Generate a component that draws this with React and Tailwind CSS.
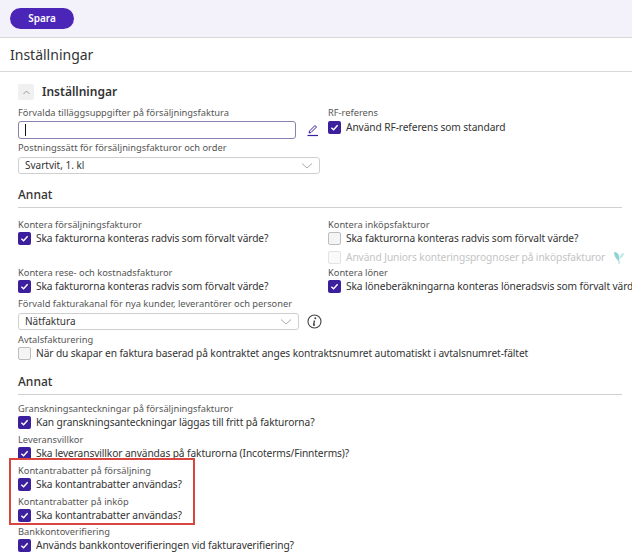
import React from "react";

const F = { fontFamily: '"Noto Sans", "Open Sans", sans-serif' };

function Cb({ checked, disabled, children }) {
  return (
    <div className={`flex items-center gap-[5px] h-[15px] text-[10.2px] tracking-[-0.1px] ${disabled ? "text-[#c4c4c4]" : "text-[#333]"}`}>
      {checked ? (
        <span className="w-[13px] h-[13px] rounded-[2px] bg-[#3b1f9c] flex items-center justify-center shrink-0">
          <svg width="9" height="9" viewBox="0 0 10 10"><path d="M1.5 5.2 L4 7.5 L8.5 2.5" stroke="#fff" strokeWidth="1.6" fill="none" /></svg>
        </span>
      ) : (
        <span className={`w-[13px] h-[13px] rounded-[2px] border shrink-0 ${disabled ? "border-[#e2e2e2] bg-[#fafafa]" : "border-[#bdbdbd] bg-[#f4f4f4]"}`} />
      )}
      <span className="whitespace-nowrap">{children}</span>
    </div>
  );
}

function Label({ children }) {
  return <div className="text-[9.3px] text-[#555] h-[13px] leading-[13px] whitespace-nowrap">{children}</div>;
}

function Chevron() {
  return (
    <svg width="12" height="8" viewBox="0 0 12 8"><path d="M1 1.5 L6 6 L11 1.5" stroke="#aaa" strokeWidth="1" fill="none" /></svg>
  );
}

function Select({ value, w }) {
  return (
    <div className={`h-[17px] border border-[#cfcfcf] rounded-[3px] bg-white flex items-center justify-between px-[6px] text-[10px] text-[#333] ${w}`}>
      <span>{value}</span>
      <Chevron />
    </div>
  );
}

function Heading({ children }) {
  return (
    <div className="mt-[12px] pb-[4px] border-b border-[#d0d0d0] text-[12px] font-medium text-[#333] leading-[17px]">{children}</div>
  );
}

export default function App() {
  return (
    <div style={F} className="w-[632px] h-[552px] overflow-hidden bg-white relative">
      <div className="h-[38px] bg-[#f3f1f9] border-b border-[#d8d8d8] flex items-center pl-[10px]">
        <button className="h-[21px] w-[64px] rounded-full bg-[#4a25b8] text-white text-[10px] font-semibold">Spara</button>
      </div>
      <div className="h-[34px] border-b border-[#d8d8d8] flex items-center pl-[10px] text-[14px] text-[#333]">Inställningar</div>
      <div className="pl-[18px] pr-[10px]">
        <div className="flex items-center gap-[8px] mt-[11px] h-[18px]">
          <span className="w-[16px] h-[16px] bg-[#f0f0f0] rounded-[2px] flex items-center justify-center">
            <svg width="7" height="5" viewBox="0 0 7 5"><path d="M0.5 4 L3.5 1 L6.5 4" stroke="#999" fill="none" /></svg>
          </span>
          <span className="text-[12px] font-semibold text-[#333]">Inställningar</span>
        </div>
        <div className="flex mt-[5px]">
          <div className="w-[310px] shrink-0">
            <Label>Förvalda tilläggsuppgifter på försäljningsfaktura</Label>
            <div className="flex items-center mt-[2px]">
              <div className="w-[278px] h-[18px] border border-[#8a7fb0] rounded-[3px] bg-white flex items-center pl-[6px]">
                <span className="w-px h-[12px] bg-[#111]" />
              </div>
              <svg className="ml-[10px]" width="14" height="14" viewBox="0 0 14 14"><path d="M3 10 L3.5 8 L9 2.5 L10.5 4 L5 9.5 Z" stroke="#3b1f9c" fill="none" strokeWidth="1" /><path d="M1.5 12.5 H12" stroke="#3b1f9c" strokeWidth="1.2" /></svg>
            </div>
            <div className="mt-[2px]"><Label>Postningssätt för försäljningsfakturor och order</Label></div>
            <div className="mt-[3px]"><Select value="Svartvit, 1. kl" w="w-[302px]" /></div>
          </div>
          <div>
            <Label>RF-referens</Label>
            <div className="mt-[1px]"><Cb checked>Använd RF-referens som standard</Cb></div>
          </div>
        </div>

        <Heading>Annat</Heading>
        <div className="flex mt-[10px]">
          <div className="w-[310px] shrink-0">
            <Label>Kontera försäljningsfakturor</Label>
            <Cb checked>Ska fakturorna konteras radvis som förvalt värde?</Cb>
          </div>
          <div>
            <Label>Kontera inköpsfakturor</Label>
            <Cb>Ska fakturorna konteras radvis som förvalt värde?</Cb>
            <div className="flex items-center gap-[8px] mt-[4px]">
              <Cb disabled>Använd Juniors konteringsprognoser på inköpsfakturor</Cb>
              <svg width="12" height="14" viewBox="0 0 12 14"><path d="M1 1 C5 1 7 4 6 10 C3 8 1 5 1 1 Z" fill="#8fd3cf" /><path d="M11 2 C8 2 6.5 4 6.5 8 C9 7 11 5 11 2 Z" fill="#c6ebe8" /><path d="M6 9 V13" stroke="#9bd6d2" /></svg>
            </div>
          </div>
        </div>
        <div className="flex mt-[1px]">
          <div className="w-[310px] shrink-0">
            <Label>Kontera rese- och kostnadsfakturor</Label>
            <Cb checked>Ska fakturorna konteras radvis som förvalt värde?</Cb>
          </div>
          <div>
            <Label>Kontera löner</Label>
            <Cb checked>Ska löneberäkningarna konteras löneradsvis som förvalt värde?</Cb>
          </div>
        </div>
        <div className="mt-[3px]"><Label>Förvald fakturakanal för nya kunder, leverantörer och personer</Label></div>
        <div className="flex items-center gap-[8px] mt-[3px]">
          <Select value="Nätfaktura" w="w-[281px]" />
          <svg width="15" height="15" viewBox="0 0 15 15"><circle cx="7.5" cy="7.5" r="6.5" stroke="#444" fill="none" strokeWidth="1.1" /><circle cx="8.3" cy="4.3" r="1" fill="#444" /><path d="M7.5 6.5 L6.5 11 M6 11 H8" stroke="#444" strokeWidth="1.3" fill="none" /></svg>
        </div>
        <div className="mt-[3px]"><Label>Avtalsfakturering</Label></div>
        <Cb>När du skapar en faktura baserad på kontraktet anges kontraktsnumret automatiskt i avtalsnumret-fältet</Cb>

        <Heading>Annat</Heading>
        <div className="mt-[7px]"><Label>Granskningsanteckningar på försäljningsfakturor</Label></div>
        <Cb checked>Kan granskningsanteckningar läggas till fritt på fakturorna?</Cb>
        <div className="mt-[3px]"><Label>Leveransvillkor</Label></div>
        <Cb checked>Ska leveransvillkor användas på fakturorna (Incoterms/Finnterms)?</Cb>
        <div className="mt-[3px]"><Label>Kontantrabatter på försäljning</Label></div>
        <Cb checked>Ska kontantrabatter användas?</Cb>
        <div className="mt-[3px]"><Label>Kontantrabatter på inköp</Label></div>
        <Cb checked>Ska kontantrabatter användas?</Cb>
        <div className="mt-[2px]"><Label>Bankkontoverifiering</Label></div>
        <Cb checked>Används bankkontoverifieringen vid fakturaverifiering?</Cb>
      </div>
      <div className="absolute left-[9px] top-[458px] w-[186px] h-[67px] border-2 border-[#d9463f] pointer-events-none" />
    </div>
  );
}
